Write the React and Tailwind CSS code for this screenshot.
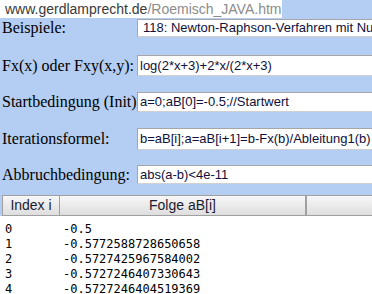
import React from "react";

const fields = [
  {
    label: "Beispiele:",
    value: "118: Newton-Raphson-Verfahren mit Nullstellensuche",
    row: "mt-[1px] h-[18px]",
    box: "pl-[5px]",
  },
  {
    label: "Fx(x) oder Fxy(x,y):",
    value: "log(2*x+3)+2*x/(2*x+3)",
    row: "mt-[18px] h-[21px]",
    box: "pl-[2px]",
  },
  {
    label: "Startbedingung (Init)",
    value: "a=0;aB[0]=-0.5;//Startwert",
    row: "mt-[16px] h-[20px]",
    box: "pl-[2px]",
  },
  {
    label: "Iterationsformel:",
    value: "b=aB[i];a=aB[i+1]=b-Fx(b)/Ableitung1(b)",
    row: "mt-[16px] h-[22px]",
    box: "pl-[2px]",
  },
  {
    label: "Abbruchbedingung:",
    value: "abs(a-b)<4e-11",
    row: "mt-[15px] h-[19px]",
    box: "pl-[2px]",
  },
];

const folge = [
  ["0", "-0.5"],
  ["1", "-0.5772588728650658"],
  ["2", "-0.5727425967584002"],
  ["3", "-0.5727246407330643"],
  ["4", "-0.5727246404519369"],
];

const App = () => {
  return (
    <div className="w-[372px] h-[294px] overflow-hidden bg-[#b4cdf2] flex flex-col">
      {/* url caption */}
      <div className="w-[282px] h-[18px] shrink-0 bg-white pl-[5px] text-[14px] leading-[18px] whitespace-nowrap font-['Liberation_Sans',Arial,sans-serif]">
        <span className="text-[#3a3a3a]">www.gerdlamprecht.de</span>
        <span className="text-[#8c8c8c]">/Roemisch_JAVA.htm</span>
      </div>

      {fields.map((f) => (
        <div key={f.label} className={`flex items-center shrink-0 ${f.row}`}>
          <div className="w-[137px] shrink-0 pl-[2px] text-[16px] leading-none text-black whitespace-nowrap font-['Liberation_Serif','Times_New_Roman',serif]">
            {f.label}
          </div>
          <div
            className={`h-full w-[260px] shrink-0 flex items-center bg-white border border-[#a6a6a6] border-b-[#d0d0d0] text-[13px] text-[#10103a] whitespace-nowrap overflow-hidden font-['Liberation_Sans',Arial,sans-serif] ${f.box}`}
          >
            {f.value}
          </div>
        </div>
      ))}

      {/* table header */}
      <div className="mt-[11px] h-[21px] shrink-0 flex pl-[2px] text-[14px] text-[#1c1c30] font-['Liberation_Sans',Arial,sans-serif]">
        <div className="w-[58px] shrink-0 flex items-center justify-center border border-[#a0a0a0] bg-gradient-to-b from-[#f7f7f7] to-[#dedede]">
          Index i
        </div>
        <div className="w-[245px] shrink-0 flex items-center justify-center border-y border-[#a0a0a0] bg-gradient-to-b from-[#f7f7f7] to-[#dedede]">
          Folge aB[i]
        </div>
        <div className="w-[2px] shrink-0 bg-[#a0a0a0]" />
        <div className="flex-1 border-y border-[#a0a0a0] bg-gradient-to-b from-[#f7f7f7] to-[#dedede]" />
      </div>

      {/* result list */}
      <div className="flex-1 bg-white pt-[6px] pl-[5px] text-[12px] leading-[15px] text-black font-['DejaVu_Sans_Mono',Consolas,monospace]">
        {folge.map(([i, v]) => (
          <div key={i} className="grid grid-cols-[58px_1fr] whitespace-nowrap">
            <span>{i}</span>
            <span>{v}</span>
          </div>
        ))}
      </div>
    </div>
  );
};

export default App;
